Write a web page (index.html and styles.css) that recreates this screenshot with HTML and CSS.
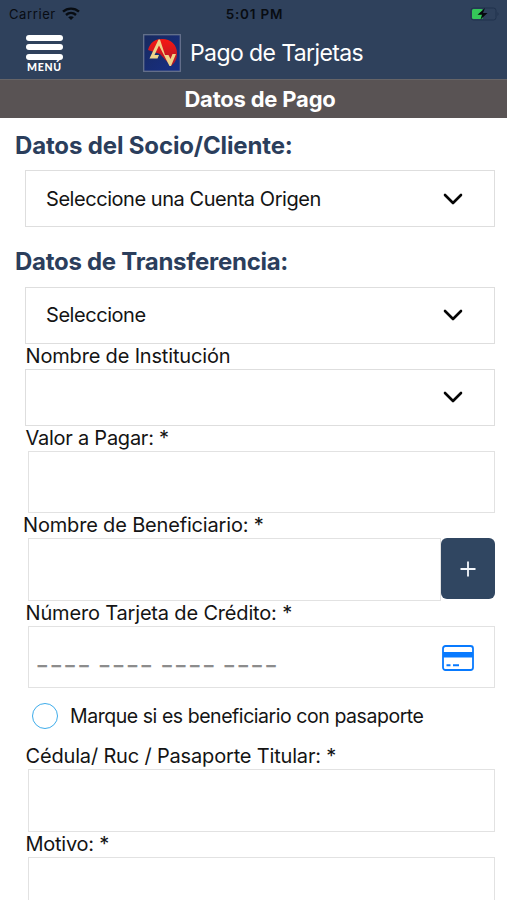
FILE: index.html
```html
<!DOCTYPE html>
<html lang="es">
<head>
<meta charset="utf-8">
<title>Pago de Tarjetas</title>
<link rel="stylesheet" href="styles.css">
</head>
<body>
<header class="top">
  <div class="status">
    <div class="carrier"><span class="carrier-name">Carrier</span>
      <svg width="18" height="13" viewBox="0 0 18 13" fill="none" stroke="#080c12" stroke-width="2.4"><path d="M1 4.700C5.500.6 12.500.6 17 4.700M4 8c3-2.700 7-2.700 10 0"/><path d="M9 13 6.200 10.200c1.600-1.400 4-1.400 5.600 0z" fill="#080c12" stroke="none"/></svg>
    </div>
    <span class="time">5:01 PM</span>
    <svg class="battery" width="30" height="14" viewBox="0 0 30 14"><rect x="1" y="1" width="25" height="12" rx="2.5" fill="none" stroke="#20324c"/><path d="M27.500 5v4q2-2 0-4" fill="#20324c"/><rect x="2" y="2" width="11" height="10" rx="1.5" fill="#35c759"/><path d="M15 1 7.500 7.700H12L10.500 12.500 17.500 6H13z" fill="#05080c"/></svg>
  </div>
  <div class="nav">
    <div class="menu"><i></i><i></i><i></i><span>MENÚ</span></div>
    <svg class="logo" width="38" height="38" viewBox="0 0 38 38"><defs><linearGradient id="r" x2="0" y2="1"><stop stop-color="#f81812"/><stop offset="1" stop-color="#a9182b"/></linearGradient><linearGradient id="b" x2="1" y2="1"><stop stop-color="#182a5e"/><stop offset="1" stop-color="#172f86"/></linearGradient></defs><rect x=".7" y=".7" width="36.600" height="36.600" fill="url(#b)" stroke="#66728c" stroke-width="1.300"/><path d="M5 16C7 8 13 5 19 5c9 0 15 6 15 14 0 6-2 10-6 13L17 20z" fill="url(#r)"/><path d="M6.500 24.500h8l1.500-3.500h-4.500L16 11.500 26.500 32h1.500L33 20h-3.500l-2 5-2-4h-3.500L17 5.500h-1.500z" fill="#efd488"/></svg>
    <h1>Pago de Tarjetas</h1>
  </div>
</header>
<div class="subtitle"><span>Datos de Pago</span></div>
<main>
  <h2 class="first"><span>Datos del Socio/Cliente:</span></h2>
  <div class="select"><span>Seleccione una Cuenta Origen</span><svg class="chev" width="20" height="12" viewBox="0 0 20 12"><path d="M2 2l8 8 8-8"/></svg></div>
  <h2 class="second"><span>Datos de Transferencia:</span></h2>
  <div class="select"><span>Seleccione</span><svg class="chev" width="20" height="12" viewBox="0 0 20 12"><path d="M2 2l8 8 8-8"/></svg></div>
  <label><span>Nombre de Institución</span></label>
  <div class="select"><span></span><svg class="chev" width="20" height="12" viewBox="0 0 20 12"><path d="M2 2l8 8 8-8"/></svg></div>
  <label class="amount"><span>Valor a Pagar: *</span></label>
  <div class="input"></div>
  <label class="beneficiary"><span>Nombre de Beneficiario: *</span></label>
  <div class="row"><div class="input"></div><div class="add"><svg width="16" height="16" viewBox="0 0 16 16"><path d="M8 .5v15M.5 8h15" stroke="#f4f8fc" stroke-width="1.800"/></svg></div></div>
  <label><span>Número Tarjeta de Crédito: *</span></label>
  <div class="input card"><span class="mask">____ ____ ____ ____</span>
    <svg width="32" height="26" viewBox="0 0 32 26"><rect x="1" y="1" width="30" height="24" rx="2.500" fill="none" stroke="#087aff" stroke-width="1.800"/><path d="M1 7h30v5.500H1z" fill="#087aff"/><path d="M4.500 20.300h4M11 20.300h6" stroke="#087aff" stroke-width="2"/></svg>
  </div>
  <div class="check"><i></i><span>Marque si es beneficiario con pasaporte</span></div>
  <label><span>Cédula/ Ruc / Pasaporte Titular: *</span></label>
  <div class="input"></div>
  <label class="amount"><span>Motivo: *</span></label>
  <div class="input"></div>
</main>
</body>
</html>
```
FILE: styles.css
```css
* { box-sizing: border-box; }
html, body { margin: 0; height: 900px; overflow: hidden; }
body { background: #fff; color: #141414; font-family: Inter, "Liberation Sans", sans-serif; font-size: 20px; letter-spacing: -.45px; }
h1, h2 { margin: 0; }
.top { height: 79px; background: #2f415c; }
.status { height: 27px; display: grid; grid-template-columns: 1fr auto 1fr; align-items: center; padding: 0 7px 0 9px; color: #080c12; font-size: 13px; letter-spacing: .6px; }
.carrier { display: flex; align-items: center; gap: 6px; }
.time { font-size: 13.500px; font-weight: 600; letter-spacing: .8px; }
.battery { justify-self: end; }
.nav { height: 52px; display: flex; align-items: center; }
.menu { width: 37px; margin: 1px 0 0 26px; display: flex; flex-direction: column; gap: 3.500px; align-items: center; }
.menu i { width: 37px; height: 6px; border-radius: 3px; background: #fff; }
.menu span { color: #fff; font: 900 10.500px/9px Lato, sans-serif; letter-spacing: .7px; }
.logo { margin-left: 80px; }
h1 { margin-left: 9px; color: #fff; font-size: 23px; font-weight: 400; letter-spacing: -.6px; }
.subtitle { height: 39px; border-top: 1px solid #666467; background: #595354; color: #fff; display: flex; align-items: center; justify-content: center; padding-left: 13px; font-size: 22px; font-weight: 700; letter-spacing: -.2px; }
h2 { padding-left: 15px; color: #2b3e5c; font-size: 24px; line-height: 30px; font-weight: 650; letter-spacing: -.15px; }
.first { height: 52px; padding-top: 13px; }
.second { height: 59.500px; padding-top: 20px; letter-spacing: -.28px; }
.select { height: 57px; margin: 0 12px 0 25px; border: 1.500px solid #dedede; display: flex; align-items: center; justify-content: space-between; padding: 0 31px 0 20px; }
.chev { fill: none; stroke: #050505; stroke-width: 2.600; stroke-linecap: round; stroke-linejoin: round; }
label { display: block; height: 25px; padding-left: 25.500px; line-height: 25px; letter-spacing: -.17px; }
.amount { letter-spacing: -.25px; }
.beneficiary { padding-left: 23px; }
.input { height: 62.600px; margin: 0 12px 0 27.500px; border: 1.500px solid #e2e2e2; }
.row { display: flex; margin: 0 12px 0 27.500px; }
.row .input { flex: 1; margin: 0; }
.add { width: 54.500px; height: 61px; border-radius: 6px; background: #304661; display: flex; align-items: center; justify-content: center; }
.card { display: flex; align-items: center; justify-content: space-between; padding: 2px 20px 0 9px; }
.mask { color: #8c8c8c; font-weight: 700; letter-spacing: 4.400px; word-spacing: -2.500px; }
.check { height: 56px; display: flex; align-items: center; padding-left: 32px; gap: 12px; font-size: 19.500px; }
.check i { width: 26px; height: 26px; border: 1.500px solid #3eacea; border-radius: 50%; }
```
